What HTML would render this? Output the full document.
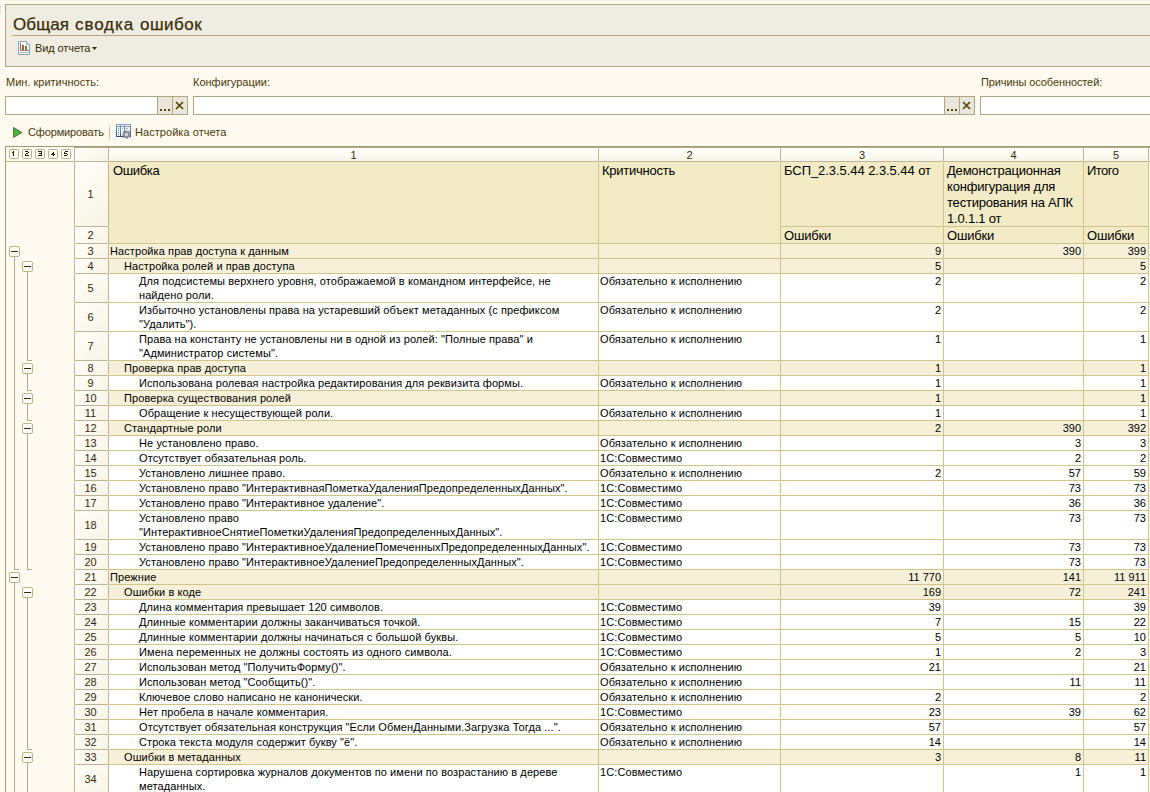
<!DOCTYPE html>
<html><head><meta charset="utf-8"><style>
html,body{margin:0;padding:0;}
body{width:1150px;height:792px;position:relative;overflow:hidden;background:#FEFAEF;font-family:"Liberation Sans",sans-serif;}
body>div,body>svg{position:absolute;}
.t{white-space:nowrap;line-height:20px;height:20px;}
.b{letter-spacing:0.12px;}
</style></head><body>
<div style="left:0px;top:0px;width:1150px;height:4px;background:#FEFBF1"></div>
<div style="left:0px;top:0px;width:1150px;height:1px;background:#F7F4E7"></div>
<div style="left:0px;top:4px;width:1px;height:10px;background:#E9E6DC"></div>
<div style="left:0px;top:67px;width:1150px;height:1px;background:#FFFEF8"></div>
<div style="left:5px;top:4px;width:1150px;height:63px;background:#EFECE1;border:1px solid #B0A882;box-sizing:border-box"></div>
<div class="t" style="left:13px;top:15px;font-size:17px;color:#3A2C08;letter-spacing:0.1px;-webkit-text-stroke:0.25px;">Общая</div>
<div class="t" style="left:75px;top:15px;font-size:17px;color:#3A2C08;letter-spacing:0.9px;-webkit-text-stroke:0.25px;">сводка</div>
<div class="t" style="left:140px;top:15px;font-size:17px;color:#3A2C08;letter-spacing:0.5px;-webkit-text-stroke:0.25px;">ошибок</div>
<div style="left:12px;top:35px;width:1139px;height:1px;background:#B0A882"></div>
<svg style="left:17px;top:40px" width="15" height="16" viewBox="0 0 15 16">
<path d="M1.5 1.5H9.5L12.5 4.5V14.5H1.5Z" fill="#F6F9FC" stroke="#8FA2BC"/>
<path d="M9.5 1.5V4.5H12.5" fill="#D5DFEA" stroke="#9FB0C6"/>
<rect x="3" y="3" width="1" height="7" fill="#707078"/>
<rect x="5" y="5" width="2" height="5" fill="#E8402A"/>
<rect x="8" y="6" width="2" height="4" fill="#3A9A2A"/>
<rect x="3" y="10" width="9" height="1" fill="#A08080"/>
<rect x="3" y="12" width="9" height="1" fill="#A8BCD4"/>
</svg>
<div class="t" style="left:35px;top:38px;font-size:11px;color:#3A2C08;letter-spacing:-0.1px;">Вид отчета</div>
<svg style="left:92px;top:47px" width="5" height="3" viewBox="0 0 5 3"><path d="M0 0H5L2.5 3Z" fill="#3A2C08"/></svg>
<div class="t" style="left:6px;top:72px;font-size:11px;color:#4A3A0C;">Мин. критичность:</div>
<div class="t" style="left:193px;top:72px;font-size:11px;color:#4A3A0C;">Конфигурации:</div>
<div class="t" style="left:981px;top:72px;font-size:11px;color:#4A3A0C;letter-spacing:-0.1px;">Причины особенностей:</div>
<div style="left:5px;top:96px;width:183px;height:19px;background:#fff;border:1px solid #ADA583;box-sizing:border-box"></div>
<div style="left:157px;top:96px;width:31px;height:19px;background:#EAE6DC;border:1px solid #ADA583;box-sizing:border-box"></div>
<div style="left:172px;top:96px;width:1px;height:19px;background:#ADA583"></div>
<div style="left:160px;top:109px;width:2px;height:2px;background:#5A4600"></div>
<div style="left:164px;top:109px;width:2px;height:2px;background:#5A4600"></div>
<div style="left:168px;top:109px;width:2px;height:2px;background:#5A4600"></div>
<svg style="left:175px;top:101px" width="9" height="9" viewBox="0 0 9 9"><path d="M1 1L8 8M8 1L1 8" stroke="#5A4600" stroke-width="1.7"/></svg>
<div style="left:193px;top:96px;width:782px;height:19px;background:#fff;border:1px solid #ADA583;box-sizing:border-box"></div>
<div style="left:944px;top:96px;width:31px;height:19px;background:#EAE6DC;border:1px solid #ADA583;box-sizing:border-box"></div>
<div style="left:959px;top:96px;width:1px;height:19px;background:#ADA583"></div>
<div style="left:947px;top:109px;width:2px;height:2px;background:#5A4600"></div>
<div style="left:951px;top:109px;width:2px;height:2px;background:#5A4600"></div>
<div style="left:955px;top:109px;width:2px;height:2px;background:#5A4600"></div>
<svg style="left:962px;top:101px" width="9" height="9" viewBox="0 0 9 9"><path d="M1 1L8 8M8 1L1 8" stroke="#5A4600" stroke-width="1.7"/></svg>
<div style="left:980px;top:96px;width:181px;height:19px;background:#fff;border:1px solid #ADA583;box-sizing:border-box"></div>
<svg style="left:12px;top:126px" width="12" height="13" viewBox="0 0 12 13">
<path d="M1.5 1.5L10 6.5L1.5 11.5Z" fill="#44B82C" stroke="#5E6B58" stroke-width="1"/></svg>
<div class="t" style="left:28px;top:122px;font-size:11px;color:#4A3A0C;letter-spacing:-0.15px;">Сформировать</div>
<div style="left:109px;top:123px;width:1px;height:19px;background:linear-gradient(#FCFAF0,#C9BF96 30%,#C9BF96 70%,#FCFAF0)"></div>
<svg style="left:116px;top:124px" width="16" height="16" viewBox="0 0 16 16">
<defs><linearGradient id="gf" x1="0" y1="0" x2="0" y2="1"><stop offset="0" stop-color="#8EA8C8"/><stop offset="1" stop-color="#2E4E7E"/></linearGradient></defs>
<rect x="0" y="0" width="15" height="13" fill="url(#gf)"/>
<rect x="1" y="1" width="3" height="1" fill="#F4F8FC"/><rect x="5" y="1" width="3" height="1" fill="#F4F8FC"/><rect x="9" y="1" width="5" height="1" fill="#F4F8FC"/>
<rect x="1" y="3" width="3" height="9" fill="#EAF6FC"/>
<rect x="5" y="3" width="3" height="9" fill="#EAF6FC"/>
<rect x="9" y="3" width="5" height="9" fill="#EAF6FC"/>
<rect x="2" y="4" width="1" height="1" fill="#6A86AA"/><rect x="2" y="6" width="1" height="1" fill="#6A86AA"/><rect x="2" y="8" width="1" height="1" fill="#6A86AA"/><rect x="2" y="10" width="1" height="1" fill="#6A86AA"/>
<rect x="6" y="4" width="1" height="1" fill="#9AAEC8"/><rect x="10" y="4" width="2" height="1" fill="#9AAEC8"/>
<path d="M15.01 9.60 L15.10 10.50 L13.83 11.16 L13.64 11.80 L14.32 13.06 L13.75 13.75 L12.39 13.33 L11.80 13.64 L11.40 15.01 L10.50 15.10 L9.84 13.83 L9.20 13.64 L7.94 14.32 L7.25 13.75 L7.67 12.39 L7.36 11.80 L5.99 11.40 L5.90 10.50 L7.17 9.84 L7.36 9.20 L6.68 7.94 L7.25 7.25 L8.61 7.67 L9.20 7.36 L9.60 5.99 L10.50 5.90 L11.16 7.17 L11.80 7.36 L13.06 6.68 L13.75 7.25 L13.33 8.61 L13.64 9.20 Z" fill="#8C8E96"/>
<circle cx="10.5" cy="10.5" r="1.5" fill="#E4E6EC"/>
</svg>
<div class="t" style="left:135px;top:122px;font-size:11px;color:#4A3A0C;letter-spacing:0.05px;">Настройка отчета</div>
<div style="left:5px;top:146px;width:1150px;height:1px;background:#A39B76"></div>
<div style="left:5px;top:146px;width:1px;height:647px;background:#A39B76"></div>
<div style="left:6px;top:161px;width:1145px;height:1px;background:#BDB594"></div>
<div style="left:74px;top:146px;width:1px;height:647px;background:#BDB594"></div>
<div style="left:108px;top:147px;width:1px;height:646px;background:#BDB594"></div>
<div style="left:9px;top:149px;width:10px;height:10px;background:#FFFDF6;border:1px solid #B9B08C;border-radius:1.5px;box-sizing:border-box"></div>
<div style="left:22px;top:149px;width:10px;height:10px;background:#FFFDF6;border:1px solid #B9B08C;border-radius:1.5px;box-sizing:border-box"></div>
<div style="left:35px;top:149px;width:10px;height:10px;background:#FFFDF6;border:1px solid #B9B08C;border-radius:1.5px;box-sizing:border-box"></div>
<div style="left:48px;top:149px;width:10px;height:10px;background:#FFFDF6;border:1px solid #B9B08C;border-radius:1.5px;box-sizing:border-box"></div>
<div style="left:61px;top:149px;width:10px;height:10px;background:#FFFDF6;border:1px solid #B9B08C;border-radius:1.5px;box-sizing:border-box"></div>
<svg style="left:11px;top:151px" width="4" height="5" viewBox="0 0 4 5" shape-rendering="crispEdges" fill="#2A1E00"><rect x="2" y="0" width="1" height="1"/><rect x="1" y="1" width="1" height="1"/><rect x="2" y="1" width="1" height="1"/><rect x="2" y="2" width="1" height="1"/><rect x="2" y="3" width="1" height="1"/><rect x="2" y="4" width="1" height="1"/></svg>
<svg style="left:25px;top:151px" width="4" height="5" viewBox="0 0 4 5" shape-rendering="crispEdges" fill="#2A1E00"><rect x="0" y="0" width="1" height="1"/><rect x="1" y="0" width="1" height="1"/><rect x="2" y="0" width="1" height="1"/><rect x="3" y="1" width="1" height="1"/><rect x="1" y="2" width="1" height="1"/><rect x="2" y="2" width="1" height="1"/><rect x="0" y="3" width="1" height="1"/><rect x="0" y="4" width="1" height="1"/><rect x="1" y="4" width="1" height="1"/><rect x="2" y="4" width="1" height="1"/><rect x="3" y="4" width="1" height="1"/></svg>
<svg style="left:38px;top:151px" width="4" height="5" viewBox="0 0 4 5" shape-rendering="crispEdges" fill="#2A1E00"><rect x="0" y="0" width="1" height="1"/><rect x="1" y="0" width="1" height="1"/><rect x="2" y="0" width="1" height="1"/><rect x="3" y="0" width="1" height="1"/><rect x="3" y="1" width="1" height="1"/><rect x="1" y="2" width="1" height="1"/><rect x="2" y="2" width="1" height="1"/><rect x="3" y="2" width="1" height="1"/><rect x="3" y="3" width="1" height="1"/><rect x="0" y="4" width="1" height="1"/><rect x="1" y="4" width="1" height="1"/><rect x="2" y="4" width="1" height="1"/><rect x="3" y="4" width="1" height="1"/></svg>
<svg style="left:51px;top:151px" width="4" height="5" viewBox="0 0 4 5" shape-rendering="crispEdges" fill="#2A1E00"><rect x="2" y="1" width="1" height="1"/><rect x="1" y="2" width="1" height="1"/><rect x="2" y="2" width="1" height="1"/><rect x="0" y="3" width="1" height="1"/><rect x="1" y="3" width="1" height="1"/><rect x="2" y="3" width="1" height="1"/><rect x="3" y="3" width="1" height="1"/><rect x="2" y="4" width="1" height="1"/></svg>
<svg style="left:64px;top:151px" width="4" height="5" viewBox="0 0 4 5" shape-rendering="crispEdges" fill="#2A1E00"><rect x="1" y="0" width="1" height="1"/><rect x="2" y="0" width="1" height="1"/><rect x="3" y="0" width="1" height="1"/><rect x="0" y="1" width="1" height="1"/><rect x="0" y="2" width="1" height="1"/><rect x="1" y="2" width="1" height="1"/><rect x="2" y="2" width="1" height="1"/><rect x="3" y="3" width="1" height="1"/><rect x="0" y="4" width="1" height="1"/><rect x="1" y="4" width="1" height="1"/><rect x="2" y="4" width="1" height="1"/></svg>
<div style="left:109px;top:148px;width:489px;height:13px;background:linear-gradient(180deg,#FFFEF9 30%,#F8F4E6)"></div>
<div style="left:598px;top:147px;width:1px;height:14px;background:#BDB594"></div>
<div class="t" style="left:109px;top:145px;font-size:11px;color:#3A2C08;width:489px;text-align:center;">1</div>
<div style="left:599px;top:148px;width:181px;height:13px;background:linear-gradient(180deg,#FFFEF9 30%,#F8F4E6)"></div>
<div style="left:780px;top:147px;width:1px;height:14px;background:#BDB594"></div>
<div class="t" style="left:599px;top:145px;font-size:11px;color:#3A2C08;width:181px;text-align:center;">2</div>
<div style="left:781px;top:148px;width:162px;height:13px;background:linear-gradient(180deg,#FFFEF9 30%,#F8F4E6)"></div>
<div style="left:943px;top:147px;width:1px;height:14px;background:#BDB594"></div>
<div class="t" style="left:781px;top:145px;font-size:11px;color:#3A2C08;width:162px;text-align:center;">3</div>
<div style="left:944px;top:148px;width:139px;height:13px;background:linear-gradient(180deg,#FFFEF9 30%,#F8F4E6)"></div>
<div style="left:1083px;top:147px;width:1px;height:14px;background:#BDB594"></div>
<div class="t" style="left:944px;top:145px;font-size:11px;color:#3A2C08;width:139px;text-align:center;">4</div>
<div style="left:1084px;top:148px;width:64px;height:13px;background:linear-gradient(180deg,#FFFEF9 30%,#F8F4E6)"></div>
<div style="left:1148px;top:147px;width:1px;height:14px;background:#BDB594"></div>
<div class="t" style="left:1084px;top:145px;font-size:11px;color:#3A2C08;width:64px;text-align:center;">5</div>
<div style="left:1149px;top:148px;width:10px;height:13px;background:linear-gradient(180deg,#FFFEF9 30%,#F8F4E6)"></div>
<div style="left:75px;top:147px;width:1076px;height:1px;background:#B3AB86"></div>
<div style="left:75px;top:148px;width:33px;height:13px;background:linear-gradient(135deg,#FFFEF9,#F8F4E6)"></div>
<div style="left:75px;top:162px;width:33px;height:64px;background:linear-gradient(135deg,#FFFEF9,#F8F4E6)"></div>
<div style="left:75px;top:226px;width:33px;height:1px;background:#BDB594"></div>
<div style="left:75px;top:243px;width:33px;height:1px;background:#BDB594"></div>
<div style="left:75px;top:227px;width:33px;height:16px;background:linear-gradient(135deg,#FFFEF9,#F8F4E6)"></div>
<div class="t" style="left:74px;top:184px;font-size:11px;color:#3A2C08;width:33px;text-align:center;">1</div>
<div class="t" style="left:74px;top:225px;font-size:11px;color:#3A2C08;width:33px;text-align:center;">2</div>
<div style="left:109px;top:162px;width:1039px;height:81px;background:#F3EBC5"></div>
<div style="left:598px;top:162px;width:1px;height:81px;background:#D2C48A"></div>
<div style="left:780px;top:162px;width:1px;height:81px;background:#D2C48A"></div>
<div style="left:943px;top:162px;width:1px;height:81px;background:#D2C48A"></div>
<div style="left:1083px;top:162px;width:1px;height:81px;background:#D2C48A"></div>
<div style="left:1148px;top:162px;width:1px;height:81px;background:#D2C48A"></div>
<div style="left:781px;top:226px;width:367px;height:1px;background:#D2C48A"></div>
<div style="left:109px;top:243px;width:1040px;height:1px;background:#D2C48A"></div>
<div class="t" style="left:113px;top:161px;font-size:13px;color:#000;letter-spacing:-0.35px;">Ошибка</div>
<div class="t" style="left:602px;top:161px;font-size:13px;color:#000;letter-spacing:-0.25px;">Критичность</div>
<div class="t" style="left:784px;top:161px;font-size:13px;color:#000;letter-spacing:-0.06px;">БСП_2.3.5.44 2.3.5.44 от</div>
<div class="t" style="left:947px;top:161px;font-size:13px;color:#000;letter-spacing:-0.2px;">Демонстрационная</div>
<div class="t" style="left:947px;top:177px;font-size:13px;color:#000;letter-spacing:-0.2px;">конфигурация для</div>
<div class="t" style="left:947px;top:193px;font-size:13px;color:#000;letter-spacing:-0.2px;">тестирования на АПК</div>
<div class="t" style="left:947px;top:209px;font-size:13px;color:#000;letter-spacing:-0.2px;">1.0.1.1 от</div>
<div class="t" style="left:1087px;top:161px;font-size:13px;color:#000;letter-spacing:-0.54px;">Итого</div>
<div class="t" style="left:784px;top:226px;font-size:13px;color:#000;letter-spacing:-0.2px;">Ошибки</div>
<div class="t" style="left:947px;top:226px;font-size:13px;color:#000;letter-spacing:-0.2px;">Ошибки</div>
<div class="t" style="left:1087px;top:226px;font-size:13px;color:#000;letter-spacing:-0.2px;">Ошибки</div>
<div style="left:109px;top:244px;width:1039px;height:14px;background:#F7F0D8"></div>
<div style="left:109px;top:258px;width:1040px;height:1px;background:#D2C48A"></div>
<div style="left:75px;top:244px;width:33px;height:14px;background:linear-gradient(135deg,#FFFEF9,#F8F4E6)"></div>
<div style="left:75px;top:258px;width:33px;height:1px;background:#BDB594"></div>
<div class="t" style="left:74px;top:241px;font-size:11px;color:#3A2C08;width:33px;text-align:center;">3</div>
<div class="t" style="left:110px;top:241px;font-size:11px;color:#000;letter-spacing:0.09px;">Настройка прав доступа к данным</div>
<div class="t" style="left:781px;top:241px;font-size:11px;color:#000;width:160px;text-align:right;">9</div>
<div class="t" style="left:944px;top:241px;font-size:11px;color:#000;width:137px;text-align:right;">390</div>
<div class="t" style="left:1084px;top:241px;font-size:11px;color:#000;width:62px;text-align:right;">399</div>
<div style="left:109px;top:259px;width:1039px;height:14px;background:#F7F0D8"></div>
<div style="left:109px;top:273px;width:1040px;height:1px;background:#D2C48A"></div>
<div style="left:75px;top:259px;width:33px;height:14px;background:linear-gradient(135deg,#FFFEF9,#F8F4E6)"></div>
<div style="left:75px;top:273px;width:33px;height:1px;background:#BDB594"></div>
<div class="t" style="left:74px;top:256px;font-size:11px;color:#3A2C08;width:33px;text-align:center;">4</div>
<div class="t" style="left:124px;top:256px;font-size:11px;color:#000;letter-spacing:0.09px;">Настройка ролей и прав доступа</div>
<div class="t" style="left:781px;top:256px;font-size:11px;color:#000;width:160px;text-align:right;">5</div>
<div class="t" style="left:1084px;top:256px;font-size:11px;color:#000;width:62px;text-align:right;">5</div>
<div style="left:109px;top:274px;width:1039px;height:28px;background:#FFFFFF"></div>
<div style="left:109px;top:302px;width:1040px;height:1px;background:#D2C48A"></div>
<div style="left:75px;top:274px;width:33px;height:28px;background:linear-gradient(135deg,#FFFEF9,#F8F4E6)"></div>
<div style="left:75px;top:302px;width:33px;height:1px;background:#BDB594"></div>
<div class="t" style="left:74px;top:278px;font-size:11px;color:#3A2C08;width:33px;text-align:center;">5</div>
<div class="t" style="left:139px;top:271px;font-size:11px;color:#000;letter-spacing:0.09px;">Для подсистемы верхнего уровня, отображаемой в командном интерфейсе, не</div>
<div class="t" style="left:139px;top:285px;font-size:11px;color:#000;letter-spacing:0.09px;">найдено роли.</div>
<div class="t" style="left:600px;top:271px;font-size:11px;color:#000;letter-spacing:0.09px;">Обязательно к исполнению</div>
<div class="t" style="left:781px;top:271px;font-size:11px;color:#000;width:160px;text-align:right;">2</div>
<div class="t" style="left:1084px;top:271px;font-size:11px;color:#000;width:62px;text-align:right;">2</div>
<div style="left:109px;top:303px;width:1039px;height:28px;background:#FFFFFF"></div>
<div style="left:109px;top:331px;width:1040px;height:1px;background:#D2C48A"></div>
<div style="left:75px;top:303px;width:33px;height:28px;background:linear-gradient(135deg,#FFFEF9,#F8F4E6)"></div>
<div style="left:75px;top:331px;width:33px;height:1px;background:#BDB594"></div>
<div class="t" style="left:74px;top:307px;font-size:11px;color:#3A2C08;width:33px;text-align:center;">6</div>
<div class="t" style="left:139px;top:300px;font-size:11px;color:#000;letter-spacing:0.09px;">Избыточно установлены права на устаревший объект метаданных (с префиксом</div>
<div class="t" style="left:139px;top:314px;font-size:11px;color:#000;letter-spacing:0.09px;">&quot;Удалить&quot;).</div>
<div class="t" style="left:600px;top:300px;font-size:11px;color:#000;letter-spacing:0.09px;">Обязательно к исполнению</div>
<div class="t" style="left:781px;top:300px;font-size:11px;color:#000;width:160px;text-align:right;">2</div>
<div class="t" style="left:1084px;top:300px;font-size:11px;color:#000;width:62px;text-align:right;">2</div>
<div style="left:109px;top:332px;width:1039px;height:28px;background:#FFFFFF"></div>
<div style="left:109px;top:360px;width:1040px;height:1px;background:#D2C48A"></div>
<div style="left:75px;top:332px;width:33px;height:28px;background:linear-gradient(135deg,#FFFEF9,#F8F4E6)"></div>
<div style="left:75px;top:360px;width:33px;height:1px;background:#BDB594"></div>
<div class="t" style="left:74px;top:336px;font-size:11px;color:#3A2C08;width:33px;text-align:center;">7</div>
<div class="t" style="left:139px;top:329px;font-size:11px;color:#000;letter-spacing:0.09px;">Права на константу не установлены ни в одной из ролей: &quot;Полные права&quot; и</div>
<div class="t" style="left:139px;top:343px;font-size:11px;color:#000;letter-spacing:0.09px;">&quot;Администратор системы&quot;.</div>
<div class="t" style="left:600px;top:329px;font-size:11px;color:#000;letter-spacing:0.09px;">Обязательно к исполнению</div>
<div class="t" style="left:781px;top:329px;font-size:11px;color:#000;width:160px;text-align:right;">1</div>
<div class="t" style="left:1084px;top:329px;font-size:11px;color:#000;width:62px;text-align:right;">1</div>
<div style="left:109px;top:361px;width:1039px;height:14px;background:#F7F0D8"></div>
<div style="left:109px;top:375px;width:1040px;height:1px;background:#D2C48A"></div>
<div style="left:75px;top:361px;width:33px;height:14px;background:linear-gradient(135deg,#FFFEF9,#F8F4E6)"></div>
<div style="left:75px;top:375px;width:33px;height:1px;background:#BDB594"></div>
<div class="t" style="left:74px;top:358px;font-size:11px;color:#3A2C08;width:33px;text-align:center;">8</div>
<div class="t" style="left:124px;top:358px;font-size:11px;color:#000;letter-spacing:0.09px;">Проверка прав доступа</div>
<div class="t" style="left:781px;top:358px;font-size:11px;color:#000;width:160px;text-align:right;">1</div>
<div class="t" style="left:1084px;top:358px;font-size:11px;color:#000;width:62px;text-align:right;">1</div>
<div style="left:109px;top:376px;width:1039px;height:14px;background:#FFFFFF"></div>
<div style="left:109px;top:390px;width:1040px;height:1px;background:#D2C48A"></div>
<div style="left:75px;top:376px;width:33px;height:14px;background:linear-gradient(135deg,#FFFEF9,#F8F4E6)"></div>
<div style="left:75px;top:390px;width:33px;height:1px;background:#BDB594"></div>
<div class="t" style="left:74px;top:373px;font-size:11px;color:#3A2C08;width:33px;text-align:center;">9</div>
<div class="t" style="left:139px;top:373px;font-size:11px;color:#000;letter-spacing:0.09px;">Использована ролевая настройка редактирования для реквизита формы.</div>
<div class="t" style="left:600px;top:373px;font-size:11px;color:#000;letter-spacing:0.09px;">Обязательно к исполнению</div>
<div class="t" style="left:781px;top:373px;font-size:11px;color:#000;width:160px;text-align:right;">1</div>
<div class="t" style="left:1084px;top:373px;font-size:11px;color:#000;width:62px;text-align:right;">1</div>
<div style="left:109px;top:391px;width:1039px;height:14px;background:#F7F0D8"></div>
<div style="left:109px;top:405px;width:1040px;height:1px;background:#D2C48A"></div>
<div style="left:75px;top:391px;width:33px;height:14px;background:linear-gradient(135deg,#FFFEF9,#F8F4E6)"></div>
<div style="left:75px;top:405px;width:33px;height:1px;background:#BDB594"></div>
<div class="t" style="left:74px;top:388px;font-size:11px;color:#3A2C08;width:33px;text-align:center;">10</div>
<div class="t" style="left:124px;top:388px;font-size:11px;color:#000;letter-spacing:0.09px;">Проверка существования ролей</div>
<div class="t" style="left:781px;top:388px;font-size:11px;color:#000;width:160px;text-align:right;">1</div>
<div class="t" style="left:1084px;top:388px;font-size:11px;color:#000;width:62px;text-align:right;">1</div>
<div style="left:109px;top:406px;width:1039px;height:14px;background:#FFFFFF"></div>
<div style="left:109px;top:420px;width:1040px;height:1px;background:#D2C48A"></div>
<div style="left:75px;top:406px;width:33px;height:14px;background:linear-gradient(135deg,#FFFEF9,#F8F4E6)"></div>
<div style="left:75px;top:420px;width:33px;height:1px;background:#BDB594"></div>
<div class="t" style="left:74px;top:403px;font-size:11px;color:#3A2C08;width:33px;text-align:center;">11</div>
<div class="t" style="left:139px;top:403px;font-size:11px;color:#000;letter-spacing:0.09px;">Обращение к несуществующей роли.</div>
<div class="t" style="left:600px;top:403px;font-size:11px;color:#000;letter-spacing:0.09px;">Обязательно к исполнению</div>
<div class="t" style="left:781px;top:403px;font-size:11px;color:#000;width:160px;text-align:right;">1</div>
<div class="t" style="left:1084px;top:403px;font-size:11px;color:#000;width:62px;text-align:right;">1</div>
<div style="left:109px;top:421px;width:1039px;height:14px;background:#F7F0D8"></div>
<div style="left:109px;top:435px;width:1040px;height:1px;background:#D2C48A"></div>
<div style="left:75px;top:421px;width:33px;height:14px;background:linear-gradient(135deg,#FFFEF9,#F8F4E6)"></div>
<div style="left:75px;top:435px;width:33px;height:1px;background:#BDB594"></div>
<div class="t" style="left:74px;top:418px;font-size:11px;color:#3A2C08;width:33px;text-align:center;">12</div>
<div class="t" style="left:124px;top:418px;font-size:11px;color:#000;letter-spacing:0.09px;">Стандартные роли</div>
<div class="t" style="left:781px;top:418px;font-size:11px;color:#000;width:160px;text-align:right;">2</div>
<div class="t" style="left:944px;top:418px;font-size:11px;color:#000;width:137px;text-align:right;">390</div>
<div class="t" style="left:1084px;top:418px;font-size:11px;color:#000;width:62px;text-align:right;">392</div>
<div style="left:109px;top:436px;width:1039px;height:14px;background:#FFFFFF"></div>
<div style="left:109px;top:450px;width:1040px;height:1px;background:#D2C48A"></div>
<div style="left:75px;top:436px;width:33px;height:14px;background:linear-gradient(135deg,#FFFEF9,#F8F4E6)"></div>
<div style="left:75px;top:450px;width:33px;height:1px;background:#BDB594"></div>
<div class="t" style="left:74px;top:433px;font-size:11px;color:#3A2C08;width:33px;text-align:center;">13</div>
<div class="t" style="left:139px;top:433px;font-size:11px;color:#000;letter-spacing:0.09px;">Не установлено право.</div>
<div class="t" style="left:600px;top:433px;font-size:11px;color:#000;letter-spacing:0.09px;">Обязательно к исполнению</div>
<div class="t" style="left:944px;top:433px;font-size:11px;color:#000;width:137px;text-align:right;">3</div>
<div class="t" style="left:1084px;top:433px;font-size:11px;color:#000;width:62px;text-align:right;">3</div>
<div style="left:109px;top:451px;width:1039px;height:14px;background:#FFFFFF"></div>
<div style="left:109px;top:465px;width:1040px;height:1px;background:#D2C48A"></div>
<div style="left:75px;top:451px;width:33px;height:14px;background:linear-gradient(135deg,#FFFEF9,#F8F4E6)"></div>
<div style="left:75px;top:465px;width:33px;height:1px;background:#BDB594"></div>
<div class="t" style="left:74px;top:448px;font-size:11px;color:#3A2C08;width:33px;text-align:center;">14</div>
<div class="t" style="left:139px;top:448px;font-size:11px;color:#000;letter-spacing:0.09px;">Отсутствует обязательная роль.</div>
<div class="t" style="left:600px;top:448px;font-size:11px;color:#000;letter-spacing:0.09px;">1С:Совместимо</div>
<div class="t" style="left:944px;top:448px;font-size:11px;color:#000;width:137px;text-align:right;">2</div>
<div class="t" style="left:1084px;top:448px;font-size:11px;color:#000;width:62px;text-align:right;">2</div>
<div style="left:109px;top:466px;width:1039px;height:14px;background:#FFFFFF"></div>
<div style="left:109px;top:480px;width:1040px;height:1px;background:#D2C48A"></div>
<div style="left:75px;top:466px;width:33px;height:14px;background:linear-gradient(135deg,#FFFEF9,#F8F4E6)"></div>
<div style="left:75px;top:480px;width:33px;height:1px;background:#BDB594"></div>
<div class="t" style="left:74px;top:463px;font-size:11px;color:#3A2C08;width:33px;text-align:center;">15</div>
<div class="t" style="left:139px;top:463px;font-size:11px;color:#000;letter-spacing:0.09px;">Установлено лишнее право.</div>
<div class="t" style="left:600px;top:463px;font-size:11px;color:#000;letter-spacing:0.09px;">Обязательно к исполнению</div>
<div class="t" style="left:781px;top:463px;font-size:11px;color:#000;width:160px;text-align:right;">2</div>
<div class="t" style="left:944px;top:463px;font-size:11px;color:#000;width:137px;text-align:right;">57</div>
<div class="t" style="left:1084px;top:463px;font-size:11px;color:#000;width:62px;text-align:right;">59</div>
<div style="left:109px;top:481px;width:1039px;height:14px;background:#FFFFFF"></div>
<div style="left:109px;top:495px;width:1040px;height:1px;background:#D2C48A"></div>
<div style="left:75px;top:481px;width:33px;height:14px;background:linear-gradient(135deg,#FFFEF9,#F8F4E6)"></div>
<div style="left:75px;top:495px;width:33px;height:1px;background:#BDB594"></div>
<div class="t" style="left:74px;top:478px;font-size:11px;color:#3A2C08;width:33px;text-align:center;">16</div>
<div class="t" style="left:139px;top:478px;font-size:11px;color:#000;letter-spacing:0.09px;">Установлено право &quot;ИнтерактивнаяПометкаУдаленияПредопределенныхДанных&quot;.</div>
<div class="t" style="left:600px;top:478px;font-size:11px;color:#000;letter-spacing:0.09px;">1С:Совместимо</div>
<div class="t" style="left:944px;top:478px;font-size:11px;color:#000;width:137px;text-align:right;">73</div>
<div class="t" style="left:1084px;top:478px;font-size:11px;color:#000;width:62px;text-align:right;">73</div>
<div style="left:109px;top:496px;width:1039px;height:14px;background:#FFFFFF"></div>
<div style="left:109px;top:510px;width:1040px;height:1px;background:#D2C48A"></div>
<div style="left:75px;top:496px;width:33px;height:14px;background:linear-gradient(135deg,#FFFEF9,#F8F4E6)"></div>
<div style="left:75px;top:510px;width:33px;height:1px;background:#BDB594"></div>
<div class="t" style="left:74px;top:493px;font-size:11px;color:#3A2C08;width:33px;text-align:center;">17</div>
<div class="t" style="left:139px;top:493px;font-size:11px;color:#000;letter-spacing:0.09px;">Установлено право &quot;Интерактивное удаление&quot;.</div>
<div class="t" style="left:600px;top:493px;font-size:11px;color:#000;letter-spacing:0.09px;">1С:Совместимо</div>
<div class="t" style="left:944px;top:493px;font-size:11px;color:#000;width:137px;text-align:right;">36</div>
<div class="t" style="left:1084px;top:493px;font-size:11px;color:#000;width:62px;text-align:right;">36</div>
<div style="left:109px;top:511px;width:1039px;height:28px;background:#FFFFFF"></div>
<div style="left:109px;top:539px;width:1040px;height:1px;background:#D2C48A"></div>
<div style="left:75px;top:511px;width:33px;height:28px;background:linear-gradient(135deg,#FFFEF9,#F8F4E6)"></div>
<div style="left:75px;top:539px;width:33px;height:1px;background:#BDB594"></div>
<div class="t" style="left:74px;top:515px;font-size:11px;color:#3A2C08;width:33px;text-align:center;">18</div>
<div class="t" style="left:139px;top:508px;font-size:11px;color:#000;letter-spacing:0.09px;">Установлено право</div>
<div class="t" style="left:139px;top:522px;font-size:11px;color:#000;letter-spacing:0.09px;">&quot;ИнтерактивноеСнятиеПометкиУдаленияПредопределенныхДанных&quot;.</div>
<div class="t" style="left:600px;top:508px;font-size:11px;color:#000;letter-spacing:0.09px;">1С:Совместимо</div>
<div class="t" style="left:944px;top:508px;font-size:11px;color:#000;width:137px;text-align:right;">73</div>
<div class="t" style="left:1084px;top:508px;font-size:11px;color:#000;width:62px;text-align:right;">73</div>
<div style="left:109px;top:540px;width:1039px;height:14px;background:#FFFFFF"></div>
<div style="left:109px;top:554px;width:1040px;height:1px;background:#D2C48A"></div>
<div style="left:75px;top:540px;width:33px;height:14px;background:linear-gradient(135deg,#FFFEF9,#F8F4E6)"></div>
<div style="left:75px;top:554px;width:33px;height:1px;background:#BDB594"></div>
<div class="t" style="left:74px;top:537px;font-size:11px;color:#3A2C08;width:33px;text-align:center;">19</div>
<div class="t" style="left:139px;top:537px;font-size:11px;color:#000;letter-spacing:0.09px;">Установлено право &quot;ИнтерактивноеУдалениеПомеченныхПредопределенныхДанных&quot;.</div>
<div class="t" style="left:600px;top:537px;font-size:11px;color:#000;letter-spacing:0.09px;">1С:Совместимо</div>
<div class="t" style="left:944px;top:537px;font-size:11px;color:#000;width:137px;text-align:right;">73</div>
<div class="t" style="left:1084px;top:537px;font-size:11px;color:#000;width:62px;text-align:right;">73</div>
<div style="left:109px;top:555px;width:1039px;height:14px;background:#FFFFFF"></div>
<div style="left:109px;top:569px;width:1040px;height:1px;background:#D2C48A"></div>
<div style="left:75px;top:555px;width:33px;height:14px;background:linear-gradient(135deg,#FFFEF9,#F8F4E6)"></div>
<div style="left:75px;top:569px;width:33px;height:1px;background:#BDB594"></div>
<div class="t" style="left:74px;top:552px;font-size:11px;color:#3A2C08;width:33px;text-align:center;">20</div>
<div class="t" style="left:139px;top:552px;font-size:11px;color:#000;letter-spacing:0.09px;">Установлено право &quot;ИнтерактивноеУдалениеПредопределенныхДанных&quot;.</div>
<div class="t" style="left:600px;top:552px;font-size:11px;color:#000;letter-spacing:0.09px;">1С:Совместимо</div>
<div class="t" style="left:944px;top:552px;font-size:11px;color:#000;width:137px;text-align:right;">73</div>
<div class="t" style="left:1084px;top:552px;font-size:11px;color:#000;width:62px;text-align:right;">73</div>
<div style="left:109px;top:570px;width:1039px;height:14px;background:#F7F0D8"></div>
<div style="left:109px;top:584px;width:1040px;height:1px;background:#D2C48A"></div>
<div style="left:75px;top:570px;width:33px;height:14px;background:linear-gradient(135deg,#FFFEF9,#F8F4E6)"></div>
<div style="left:75px;top:584px;width:33px;height:1px;background:#BDB594"></div>
<div class="t" style="left:74px;top:567px;font-size:11px;color:#3A2C08;width:33px;text-align:center;">21</div>
<div class="t" style="left:110px;top:567px;font-size:11px;color:#000;letter-spacing:0.09px;">Прежние</div>
<div class="t" style="left:781px;top:567px;font-size:11px;color:#000;width:160px;text-align:right;">11 770</div>
<div class="t" style="left:944px;top:567px;font-size:11px;color:#000;width:137px;text-align:right;">141</div>
<div class="t" style="left:1084px;top:567px;font-size:11px;color:#000;width:62px;text-align:right;">11 911</div>
<div style="left:109px;top:585px;width:1039px;height:14px;background:#F7F0D8"></div>
<div style="left:109px;top:599px;width:1040px;height:1px;background:#D2C48A"></div>
<div style="left:75px;top:585px;width:33px;height:14px;background:linear-gradient(135deg,#FFFEF9,#F8F4E6)"></div>
<div style="left:75px;top:599px;width:33px;height:1px;background:#BDB594"></div>
<div class="t" style="left:74px;top:582px;font-size:11px;color:#3A2C08;width:33px;text-align:center;">22</div>
<div class="t" style="left:124px;top:582px;font-size:11px;color:#000;letter-spacing:0.09px;">Ошибки в коде</div>
<div class="t" style="left:781px;top:582px;font-size:11px;color:#000;width:160px;text-align:right;">169</div>
<div class="t" style="left:944px;top:582px;font-size:11px;color:#000;width:137px;text-align:right;">72</div>
<div class="t" style="left:1084px;top:582px;font-size:11px;color:#000;width:62px;text-align:right;">241</div>
<div style="left:109px;top:600px;width:1039px;height:14px;background:#FFFFFF"></div>
<div style="left:109px;top:614px;width:1040px;height:1px;background:#D2C48A"></div>
<div style="left:75px;top:600px;width:33px;height:14px;background:linear-gradient(135deg,#FFFEF9,#F8F4E6)"></div>
<div style="left:75px;top:614px;width:33px;height:1px;background:#BDB594"></div>
<div class="t" style="left:74px;top:597px;font-size:11px;color:#3A2C08;width:33px;text-align:center;">23</div>
<div class="t" style="left:139px;top:597px;font-size:11px;color:#000;letter-spacing:0.09px;">Длина комментария превышает 120 символов.</div>
<div class="t" style="left:600px;top:597px;font-size:11px;color:#000;letter-spacing:0.09px;">1С:Совместимо</div>
<div class="t" style="left:781px;top:597px;font-size:11px;color:#000;width:160px;text-align:right;">39</div>
<div class="t" style="left:1084px;top:597px;font-size:11px;color:#000;width:62px;text-align:right;">39</div>
<div style="left:109px;top:615px;width:1039px;height:14px;background:#FFFFFF"></div>
<div style="left:109px;top:629px;width:1040px;height:1px;background:#D2C48A"></div>
<div style="left:75px;top:615px;width:33px;height:14px;background:linear-gradient(135deg,#FFFEF9,#F8F4E6)"></div>
<div style="left:75px;top:629px;width:33px;height:1px;background:#BDB594"></div>
<div class="t" style="left:74px;top:612px;font-size:11px;color:#3A2C08;width:33px;text-align:center;">24</div>
<div class="t" style="left:139px;top:612px;font-size:11px;color:#000;letter-spacing:0.09px;">Длинные комментарии должны заканчиваться точкой.</div>
<div class="t" style="left:600px;top:612px;font-size:11px;color:#000;letter-spacing:0.09px;">1С:Совместимо</div>
<div class="t" style="left:781px;top:612px;font-size:11px;color:#000;width:160px;text-align:right;">7</div>
<div class="t" style="left:944px;top:612px;font-size:11px;color:#000;width:137px;text-align:right;">15</div>
<div class="t" style="left:1084px;top:612px;font-size:11px;color:#000;width:62px;text-align:right;">22</div>
<div style="left:109px;top:630px;width:1039px;height:14px;background:#FFFFFF"></div>
<div style="left:109px;top:644px;width:1040px;height:1px;background:#D2C48A"></div>
<div style="left:75px;top:630px;width:33px;height:14px;background:linear-gradient(135deg,#FFFEF9,#F8F4E6)"></div>
<div style="left:75px;top:644px;width:33px;height:1px;background:#BDB594"></div>
<div class="t" style="left:74px;top:627px;font-size:11px;color:#3A2C08;width:33px;text-align:center;">25</div>
<div class="t" style="left:139px;top:627px;font-size:11px;color:#000;letter-spacing:0.09px;">Длинные комментарии должны начинаться с большой буквы.</div>
<div class="t" style="left:600px;top:627px;font-size:11px;color:#000;letter-spacing:0.09px;">1С:Совместимо</div>
<div class="t" style="left:781px;top:627px;font-size:11px;color:#000;width:160px;text-align:right;">5</div>
<div class="t" style="left:944px;top:627px;font-size:11px;color:#000;width:137px;text-align:right;">5</div>
<div class="t" style="left:1084px;top:627px;font-size:11px;color:#000;width:62px;text-align:right;">10</div>
<div style="left:109px;top:645px;width:1039px;height:14px;background:#FFFFFF"></div>
<div style="left:109px;top:659px;width:1040px;height:1px;background:#D2C48A"></div>
<div style="left:75px;top:645px;width:33px;height:14px;background:linear-gradient(135deg,#FFFEF9,#F8F4E6)"></div>
<div style="left:75px;top:659px;width:33px;height:1px;background:#BDB594"></div>
<div class="t" style="left:74px;top:642px;font-size:11px;color:#3A2C08;width:33px;text-align:center;">26</div>
<div class="t" style="left:139px;top:642px;font-size:11px;color:#000;letter-spacing:0.09px;">Имена переменных не должны состоять из одного символа.</div>
<div class="t" style="left:600px;top:642px;font-size:11px;color:#000;letter-spacing:0.09px;">1С:Совместимо</div>
<div class="t" style="left:781px;top:642px;font-size:11px;color:#000;width:160px;text-align:right;">1</div>
<div class="t" style="left:944px;top:642px;font-size:11px;color:#000;width:137px;text-align:right;">2</div>
<div class="t" style="left:1084px;top:642px;font-size:11px;color:#000;width:62px;text-align:right;">3</div>
<div style="left:109px;top:660px;width:1039px;height:14px;background:#FFFFFF"></div>
<div style="left:109px;top:674px;width:1040px;height:1px;background:#D2C48A"></div>
<div style="left:75px;top:660px;width:33px;height:14px;background:linear-gradient(135deg,#FFFEF9,#F8F4E6)"></div>
<div style="left:75px;top:674px;width:33px;height:1px;background:#BDB594"></div>
<div class="t" style="left:74px;top:657px;font-size:11px;color:#3A2C08;width:33px;text-align:center;">27</div>
<div class="t" style="left:139px;top:657px;font-size:11px;color:#000;letter-spacing:0.09px;">Использован метод &quot;ПолучитьФорму()&quot;.</div>
<div class="t" style="left:600px;top:657px;font-size:11px;color:#000;letter-spacing:0.09px;">Обязательно к исполнению</div>
<div class="t" style="left:781px;top:657px;font-size:11px;color:#000;width:160px;text-align:right;">21</div>
<div class="t" style="left:1084px;top:657px;font-size:11px;color:#000;width:62px;text-align:right;">21</div>
<div style="left:109px;top:675px;width:1039px;height:14px;background:#FFFFFF"></div>
<div style="left:109px;top:689px;width:1040px;height:1px;background:#D2C48A"></div>
<div style="left:75px;top:675px;width:33px;height:14px;background:linear-gradient(135deg,#FFFEF9,#F8F4E6)"></div>
<div style="left:75px;top:689px;width:33px;height:1px;background:#BDB594"></div>
<div class="t" style="left:74px;top:672px;font-size:11px;color:#3A2C08;width:33px;text-align:center;">28</div>
<div class="t" style="left:139px;top:672px;font-size:11px;color:#000;letter-spacing:0.09px;">Использован метод &quot;Сообщить()&quot;.</div>
<div class="t" style="left:600px;top:672px;font-size:11px;color:#000;letter-spacing:0.09px;">Обязательно к исполнению</div>
<div class="t" style="left:944px;top:672px;font-size:11px;color:#000;width:137px;text-align:right;">11</div>
<div class="t" style="left:1084px;top:672px;font-size:11px;color:#000;width:62px;text-align:right;">11</div>
<div style="left:109px;top:690px;width:1039px;height:14px;background:#FFFFFF"></div>
<div style="left:109px;top:704px;width:1040px;height:1px;background:#D2C48A"></div>
<div style="left:75px;top:690px;width:33px;height:14px;background:linear-gradient(135deg,#FFFEF9,#F8F4E6)"></div>
<div style="left:75px;top:704px;width:33px;height:1px;background:#BDB594"></div>
<div class="t" style="left:74px;top:687px;font-size:11px;color:#3A2C08;width:33px;text-align:center;">29</div>
<div class="t" style="left:139px;top:687px;font-size:11px;color:#000;letter-spacing:0.09px;">Ключевое слово написано не канонически.</div>
<div class="t" style="left:600px;top:687px;font-size:11px;color:#000;letter-spacing:0.09px;">Обязательно к исполнению</div>
<div class="t" style="left:781px;top:687px;font-size:11px;color:#000;width:160px;text-align:right;">2</div>
<div class="t" style="left:1084px;top:687px;font-size:11px;color:#000;width:62px;text-align:right;">2</div>
<div style="left:109px;top:705px;width:1039px;height:14px;background:#FFFFFF"></div>
<div style="left:109px;top:719px;width:1040px;height:1px;background:#D2C48A"></div>
<div style="left:75px;top:705px;width:33px;height:14px;background:linear-gradient(135deg,#FFFEF9,#F8F4E6)"></div>
<div style="left:75px;top:719px;width:33px;height:1px;background:#BDB594"></div>
<div class="t" style="left:74px;top:702px;font-size:11px;color:#3A2C08;width:33px;text-align:center;">30</div>
<div class="t" style="left:139px;top:702px;font-size:11px;color:#000;letter-spacing:0.09px;">Нет пробела в начале комментария.</div>
<div class="t" style="left:600px;top:702px;font-size:11px;color:#000;letter-spacing:0.09px;">1С:Совместимо</div>
<div class="t" style="left:781px;top:702px;font-size:11px;color:#000;width:160px;text-align:right;">23</div>
<div class="t" style="left:944px;top:702px;font-size:11px;color:#000;width:137px;text-align:right;">39</div>
<div class="t" style="left:1084px;top:702px;font-size:11px;color:#000;width:62px;text-align:right;">62</div>
<div style="left:109px;top:720px;width:1039px;height:14px;background:#FFFFFF"></div>
<div style="left:109px;top:734px;width:1040px;height:1px;background:#D2C48A"></div>
<div style="left:75px;top:720px;width:33px;height:14px;background:linear-gradient(135deg,#FFFEF9,#F8F4E6)"></div>
<div style="left:75px;top:734px;width:33px;height:1px;background:#BDB594"></div>
<div class="t" style="left:74px;top:717px;font-size:11px;color:#3A2C08;width:33px;text-align:center;">31</div>
<div class="t" style="left:139px;top:717px;font-size:11px;color:#000;letter-spacing:0.09px;">Отсутствует обязательная конструкция &quot;Если ОбменДанными.Загрузка Тогда ...&quot;.</div>
<div class="t" style="left:600px;top:717px;font-size:11px;color:#000;letter-spacing:0.09px;">Обязательно к исполнению</div>
<div class="t" style="left:781px;top:717px;font-size:11px;color:#000;width:160px;text-align:right;">57</div>
<div class="t" style="left:1084px;top:717px;font-size:11px;color:#000;width:62px;text-align:right;">57</div>
<div style="left:109px;top:735px;width:1039px;height:14px;background:#FFFFFF"></div>
<div style="left:109px;top:749px;width:1040px;height:1px;background:#D2C48A"></div>
<div style="left:75px;top:735px;width:33px;height:14px;background:linear-gradient(135deg,#FFFEF9,#F8F4E6)"></div>
<div style="left:75px;top:749px;width:33px;height:1px;background:#BDB594"></div>
<div class="t" style="left:74px;top:732px;font-size:11px;color:#3A2C08;width:33px;text-align:center;">32</div>
<div class="t" style="left:139px;top:732px;font-size:11px;color:#000;letter-spacing:0.09px;">Строка текста модуля содержит букву &quot;ё&quot;.</div>
<div class="t" style="left:600px;top:732px;font-size:11px;color:#000;letter-spacing:0.09px;">Обязательно к исполнению</div>
<div class="t" style="left:781px;top:732px;font-size:11px;color:#000;width:160px;text-align:right;">14</div>
<div class="t" style="left:1084px;top:732px;font-size:11px;color:#000;width:62px;text-align:right;">14</div>
<div style="left:109px;top:750px;width:1039px;height:14px;background:#F7F0D8"></div>
<div style="left:109px;top:764px;width:1040px;height:1px;background:#D2C48A"></div>
<div style="left:75px;top:750px;width:33px;height:14px;background:linear-gradient(135deg,#FFFEF9,#F8F4E6)"></div>
<div style="left:75px;top:764px;width:33px;height:1px;background:#BDB594"></div>
<div class="t" style="left:74px;top:747px;font-size:11px;color:#3A2C08;width:33px;text-align:center;">33</div>
<div class="t" style="left:124px;top:747px;font-size:11px;color:#000;letter-spacing:0.09px;">Ошибки в метаданных</div>
<div class="t" style="left:781px;top:747px;font-size:11px;color:#000;width:160px;text-align:right;">3</div>
<div class="t" style="left:944px;top:747px;font-size:11px;color:#000;width:137px;text-align:right;">8</div>
<div class="t" style="left:1084px;top:747px;font-size:11px;color:#000;width:62px;text-align:right;">11</div>
<div style="left:109px;top:765px;width:1039px;height:28px;background:#FFFFFF"></div>
<div style="left:109px;top:793px;width:1040px;height:1px;background:#D2C48A"></div>
<div style="left:75px;top:765px;width:33px;height:28px;background:linear-gradient(135deg,#FFFEF9,#F8F4E6)"></div>
<div style="left:75px;top:793px;width:33px;height:1px;background:#BDB594"></div>
<div class="t" style="left:74px;top:769px;font-size:11px;color:#3A2C08;width:33px;text-align:center;">34</div>
<div class="t" style="left:139px;top:762px;font-size:11px;color:#000;letter-spacing:0.09px;">Нарушена сортировка журналов документов по имени по возрастанию в дереве</div>
<div class="t" style="left:139px;top:776px;font-size:11px;color:#000;letter-spacing:0.09px;">метаданных.</div>
<div class="t" style="left:600px;top:762px;font-size:11px;color:#000;letter-spacing:0.09px;">1С:Совместимо</div>
<div class="t" style="left:944px;top:762px;font-size:11px;color:#000;width:137px;text-align:right;">1</div>
<div class="t" style="left:1084px;top:762px;font-size:11px;color:#000;width:62px;text-align:right;">1</div>
<div style="left:598px;top:244px;width:1px;height:549px;background:#D2C48A"></div>
<div style="left:780px;top:244px;width:1px;height:549px;background:#D2C48A"></div>
<div style="left:943px;top:244px;width:1px;height:549px;background:#D2C48A"></div>
<div style="left:1083px;top:244px;width:1px;height:549px;background:#D2C48A"></div>
<div style="left:1148px;top:244px;width:1px;height:549px;background:#D2C48A"></div>
<div style="left:74px;top:161px;width:1px;height:1px;background:#E6E0CA"></div>
<div style="left:108px;top:161px;width:1px;height:1px;background:#E6E0CA"></div>
<div style="left:74px;top:226px;width:1px;height:1px;background:#E6E0CA"></div>
<div style="left:108px;top:226px;width:1px;height:1px;background:#E6E0CA"></div>
<div style="left:74px;top:243px;width:1px;height:1px;background:#E6E0CA"></div>
<div style="left:108px;top:243px;width:1px;height:1px;background:#E6E0CA"></div>
<div style="left:74px;top:258px;width:1px;height:1px;background:#E6E0CA"></div>
<div style="left:108px;top:258px;width:1px;height:1px;background:#E6E0CA"></div>
<div style="left:74px;top:273px;width:1px;height:1px;background:#E6E0CA"></div>
<div style="left:108px;top:273px;width:1px;height:1px;background:#E6E0CA"></div>
<div style="left:74px;top:302px;width:1px;height:1px;background:#E6E0CA"></div>
<div style="left:108px;top:302px;width:1px;height:1px;background:#E6E0CA"></div>
<div style="left:74px;top:331px;width:1px;height:1px;background:#E6E0CA"></div>
<div style="left:108px;top:331px;width:1px;height:1px;background:#E6E0CA"></div>
<div style="left:74px;top:360px;width:1px;height:1px;background:#E6E0CA"></div>
<div style="left:108px;top:360px;width:1px;height:1px;background:#E6E0CA"></div>
<div style="left:74px;top:375px;width:1px;height:1px;background:#E6E0CA"></div>
<div style="left:108px;top:375px;width:1px;height:1px;background:#E6E0CA"></div>
<div style="left:74px;top:390px;width:1px;height:1px;background:#E6E0CA"></div>
<div style="left:108px;top:390px;width:1px;height:1px;background:#E6E0CA"></div>
<div style="left:74px;top:405px;width:1px;height:1px;background:#E6E0CA"></div>
<div style="left:108px;top:405px;width:1px;height:1px;background:#E6E0CA"></div>
<div style="left:74px;top:420px;width:1px;height:1px;background:#E6E0CA"></div>
<div style="left:108px;top:420px;width:1px;height:1px;background:#E6E0CA"></div>
<div style="left:74px;top:435px;width:1px;height:1px;background:#E6E0CA"></div>
<div style="left:108px;top:435px;width:1px;height:1px;background:#E6E0CA"></div>
<div style="left:74px;top:450px;width:1px;height:1px;background:#E6E0CA"></div>
<div style="left:108px;top:450px;width:1px;height:1px;background:#E6E0CA"></div>
<div style="left:74px;top:465px;width:1px;height:1px;background:#E6E0CA"></div>
<div style="left:108px;top:465px;width:1px;height:1px;background:#E6E0CA"></div>
<div style="left:74px;top:480px;width:1px;height:1px;background:#E6E0CA"></div>
<div style="left:108px;top:480px;width:1px;height:1px;background:#E6E0CA"></div>
<div style="left:74px;top:495px;width:1px;height:1px;background:#E6E0CA"></div>
<div style="left:108px;top:495px;width:1px;height:1px;background:#E6E0CA"></div>
<div style="left:74px;top:510px;width:1px;height:1px;background:#E6E0CA"></div>
<div style="left:108px;top:510px;width:1px;height:1px;background:#E6E0CA"></div>
<div style="left:74px;top:539px;width:1px;height:1px;background:#E6E0CA"></div>
<div style="left:108px;top:539px;width:1px;height:1px;background:#E6E0CA"></div>
<div style="left:74px;top:554px;width:1px;height:1px;background:#E6E0CA"></div>
<div style="left:108px;top:554px;width:1px;height:1px;background:#E6E0CA"></div>
<div style="left:74px;top:569px;width:1px;height:1px;background:#E6E0CA"></div>
<div style="left:108px;top:569px;width:1px;height:1px;background:#E6E0CA"></div>
<div style="left:74px;top:584px;width:1px;height:1px;background:#E6E0CA"></div>
<div style="left:108px;top:584px;width:1px;height:1px;background:#E6E0CA"></div>
<div style="left:74px;top:599px;width:1px;height:1px;background:#E6E0CA"></div>
<div style="left:108px;top:599px;width:1px;height:1px;background:#E6E0CA"></div>
<div style="left:74px;top:614px;width:1px;height:1px;background:#E6E0CA"></div>
<div style="left:108px;top:614px;width:1px;height:1px;background:#E6E0CA"></div>
<div style="left:74px;top:629px;width:1px;height:1px;background:#E6E0CA"></div>
<div style="left:108px;top:629px;width:1px;height:1px;background:#E6E0CA"></div>
<div style="left:74px;top:644px;width:1px;height:1px;background:#E6E0CA"></div>
<div style="left:108px;top:644px;width:1px;height:1px;background:#E6E0CA"></div>
<div style="left:74px;top:659px;width:1px;height:1px;background:#E6E0CA"></div>
<div style="left:108px;top:659px;width:1px;height:1px;background:#E6E0CA"></div>
<div style="left:74px;top:674px;width:1px;height:1px;background:#E6E0CA"></div>
<div style="left:108px;top:674px;width:1px;height:1px;background:#E6E0CA"></div>
<div style="left:74px;top:689px;width:1px;height:1px;background:#E6E0CA"></div>
<div style="left:108px;top:689px;width:1px;height:1px;background:#E6E0CA"></div>
<div style="left:74px;top:704px;width:1px;height:1px;background:#E6E0CA"></div>
<div style="left:108px;top:704px;width:1px;height:1px;background:#E6E0CA"></div>
<div style="left:74px;top:719px;width:1px;height:1px;background:#E6E0CA"></div>
<div style="left:108px;top:719px;width:1px;height:1px;background:#E6E0CA"></div>
<div style="left:74px;top:734px;width:1px;height:1px;background:#E6E0CA"></div>
<div style="left:108px;top:734px;width:1px;height:1px;background:#E6E0CA"></div>
<div style="left:74px;top:749px;width:1px;height:1px;background:#E6E0CA"></div>
<div style="left:108px;top:749px;width:1px;height:1px;background:#E6E0CA"></div>
<div style="left:74px;top:764px;width:1px;height:1px;background:#E6E0CA"></div>
<div style="left:108px;top:764px;width:1px;height:1px;background:#E6E0CA"></div>
<div style="left:108px;top:161px;width:1px;height:1px;background:#E6E0CA"></div>
<div style="left:598px;top:161px;width:1px;height:1px;background:#E6E0CA"></div>
<div style="left:780px;top:161px;width:1px;height:1px;background:#E6E0CA"></div>
<div style="left:943px;top:161px;width:1px;height:1px;background:#E6E0CA"></div>
<div style="left:1083px;top:161px;width:1px;height:1px;background:#E6E0CA"></div>
<div style="left:1148px;top:161px;width:1px;height:1px;background:#E6E0CA"></div>
<div style="left:74px;top:161px;width:1px;height:1px;background:#E6E0CA"></div>
<div style="left:14px;top:257px;width:1px;height:313px;background:#B3AA86"></div>
<div style="left:14px;top:569px;width:5px;height:1px;background:#B3AA86"></div>
<div style="left:14px;top:583px;width:1px;height:215px;background:#B3AA86"></div>
<div style="left:27px;top:272px;width:1px;height:89px;background:#B3AA86"></div>
<div style="left:27px;top:360px;width:5px;height:1px;background:#B3AA86"></div>
<div style="left:27px;top:374px;width:1px;height:17px;background:#B3AA86"></div>
<div style="left:27px;top:390px;width:5px;height:1px;background:#B3AA86"></div>
<div style="left:27px;top:404px;width:1px;height:17px;background:#B3AA86"></div>
<div style="left:27px;top:420px;width:5px;height:1px;background:#B3AA86"></div>
<div style="left:27px;top:434px;width:1px;height:136px;background:#B3AA86"></div>
<div style="left:27px;top:569px;width:5px;height:1px;background:#B3AA86"></div>
<div style="left:27px;top:598px;width:1px;height:152px;background:#B3AA86"></div>
<div style="left:27px;top:749px;width:5px;height:1px;background:#B3AA86"></div>
<div style="left:27px;top:763px;width:1px;height:35px;background:#B3AA86"></div>
<div style="left:9px;top:246px;width:11px;height:11px;background:#FFFDF6;border:1px solid #BDB48E;border-radius:2px;box-sizing:border-box"></div>
<div style="left:11px;top:251px;width:7px;height:1px;background:#3A2C08"></div>
<div style="left:9px;top:572px;width:11px;height:11px;background:#FFFDF6;border:1px solid #BDB48E;border-radius:2px;box-sizing:border-box"></div>
<div style="left:11px;top:577px;width:7px;height:1px;background:#3A2C08"></div>
<div style="left:22px;top:261px;width:11px;height:11px;background:#FFFDF6;border:1px solid #BDB48E;border-radius:2px;box-sizing:border-box"></div>
<div style="left:24px;top:266px;width:7px;height:1px;background:#3A2C08"></div>
<div style="left:22px;top:363px;width:11px;height:11px;background:#FFFDF6;border:1px solid #BDB48E;border-radius:2px;box-sizing:border-box"></div>
<div style="left:24px;top:368px;width:7px;height:1px;background:#3A2C08"></div>
<div style="left:22px;top:393px;width:11px;height:11px;background:#FFFDF6;border:1px solid #BDB48E;border-radius:2px;box-sizing:border-box"></div>
<div style="left:24px;top:398px;width:7px;height:1px;background:#3A2C08"></div>
<div style="left:22px;top:423px;width:11px;height:11px;background:#FFFDF6;border:1px solid #BDB48E;border-radius:2px;box-sizing:border-box"></div>
<div style="left:24px;top:428px;width:7px;height:1px;background:#3A2C08"></div>
<div style="left:22px;top:587px;width:11px;height:11px;background:#FFFDF6;border:1px solid #BDB48E;border-radius:2px;box-sizing:border-box"></div>
<div style="left:24px;top:592px;width:7px;height:1px;background:#3A2C08"></div>
<div style="left:22px;top:752px;width:11px;height:11px;background:#FFFDF6;border:1px solid #BDB48E;border-radius:2px;box-sizing:border-box"></div>
<div style="left:24px;top:757px;width:7px;height:1px;background:#3A2C08"></div>
</body></html>
